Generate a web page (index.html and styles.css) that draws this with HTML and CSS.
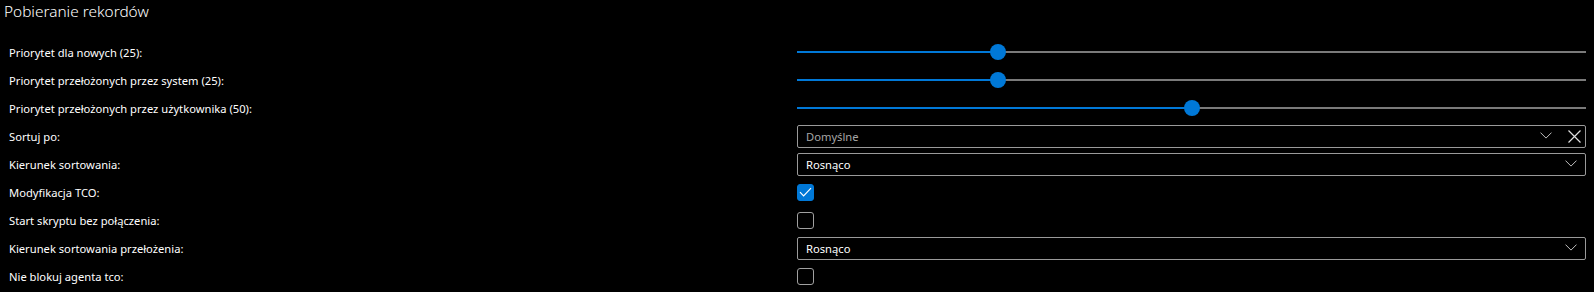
FILE: index.html
```html
<!DOCTYPE html>
<html lang="pl">
<head>
  <meta charset="UTF-8" />
  <title>Pobieranie rekordów</title>
  <link rel="stylesheet" href="styles.css">
</head>
<body>
  <div class="panel">
    <h2 class="panel-title">Pobieranie rekordów</h2>

    <div class="form-grid">
      <div class="label">Priorytet dla nowych (25):</div>
      <div class="control">
        <div class="slider" style="--val: 0.25">
          <div class="track-fill"></div>
          <div class="thumb"></div>
        </div>
      </div>

      <div class="label">Priorytet przełożonych przez system (25):</div>
      <div class="control">
        <div class="slider" style="--val: 0.25">
          <div class="track-fill"></div>
          <div class="thumb"></div>
        </div>
      </div>

      <div class="label">Priorytet przełożonych przez użytkownika (50):</div>
      <div class="control">
        <div class="slider" style="--val: 0.5">
          <div class="track-fill"></div>
          <div class="thumb"></div>
        </div>
      </div>

      <div class="label">Sortuj po:</div>
      <div class="control">
        <div class="select clearable">
          <span class="select-text placeholder">Domyślne</span>
          <svg class="chevron" width="12" height="7" viewBox="0 0 12 7"><path d="M0.5 0.6 L6 6.1 L11.5 0.6" fill="none" stroke="#bdbdbd" stroke-width="1"/></svg>
          <svg class="clear" width="13" height="13" viewBox="0 0 13 13"><path d="M0.5 0.5 L12.5 12.5 M12.5 0.5 L0.5 12.5" fill="none" stroke="#e0e0e0" stroke-width="1.2"/></svg>
        </div>
      </div>

      <div class="label">Kierunek sortowania:</div>
      <div class="control">
        <div class="select">
          <span class="select-text">Rosnąco</span>
          <svg class="chevron" width="12" height="7" viewBox="0 0 12 7"><path d="M0.5 0.6 L6 6.1 L11.5 0.6" fill="none" stroke="#bdbdbd" stroke-width="1"/></svg>
        </div>
      </div>

      <div class="label">Modyfikacja TCO:</div>
      <div class="control">
        <div class="checkbox checked">
          <svg width="13" height="10" viewBox="0 0 13 10"><path d="M1 5.2 L4.6 8.8 L12 1.2" fill="none" stroke="#fff" stroke-width="1.2"/></svg>
        </div>
      </div>

      <div class="label">Start skryptu bez połączenia:</div>
      <div class="control">
        <div class="checkbox"></div>
      </div>

      <div class="label">Kierunek sortowania przełożenia:</div>
      <div class="control">
        <div class="select">
          <span class="select-text">Rosnąco</span>
          <svg class="chevron" width="12" height="7" viewBox="0 0 12 7"><path d="M0.5 0.6 L6 6.1 L11.5 0.6" fill="none" stroke="#bdbdbd" stroke-width="1"/></svg>
        </div>
      </div>

      <div class="label">Nie blokuj agenta tco:</div>
      <div class="control">
        <div class="checkbox"></div>
      </div>
    </div>
  </div>
</body>
</html>
```

FILE: styles.css
```css
* {
  margin: 0;
  padding: 0;
  box-sizing: border-box;
}
body {
  background: #000;
  color: #fff;
  font-family: "Segoe UI", "Noto Sans", "Open Sans", sans-serif;
  font-size: 11.2px;
}
.panel {
  padding: 0 8px 0 4px;
}
/* Title */
.panel-title {
  font-weight: 300;
  font-size: 15.4px;
  height: 38px;
  line-height: 24px;
  color: #fff;
}
/* Form rows */
.form-grid {
  display: grid;
  grid-template-columns: 793px 1fr;
  grid-auto-rows: 28px;
}
.label {
  display: flex;
  align-items: center;
  padding-left: 5px;
  color: #fff;
}
.control {
  display: flex;
  align-items: center;
}
/* Slider */
.slider {
  position: relative;
  width: 100%;
  height: 2px;
  background: #7a7a7a;
}
.track-fill {
  height: 100%;
  width: calc((100% - 16px) * var(--val) + 8px);
  background: #0078d7;
}
.thumb {
  position: absolute;
  top: -7px;
  left: calc((100% - 16px) * var(--val));
  width: 16px;
  height: 16px;
  border-radius: 50%;
  background: #0078d7;
}
/* Select */
.select {
  width: 100%;
  height: 23px;
  border: 1px solid #9a9a9a;
  border-radius: 2px;
  display: flex;
  align-items: center;
  padding: 0 8px 0 8px;
}
.select.clearable {
  padding-right: 4px;
}
.select-text {
  flex: 1;
  color: #fff;
}
.select-text.placeholder {
  color: #a6a6a6;
}
.chevron {
  margin-top: -1px;
}
.clear {
  margin-left: 16px;
}
/* Checkbox */
.checkbox {
  width: 17px;
  height: 17px;
  border: 1px solid #a0a0a0;
  border-radius: 3px;
  display: flex;
  align-items: center;
  justify-content: center;
}
.checkbox.checked {
  background: #0078d7;
  border-color: #0078d7;
}
```
